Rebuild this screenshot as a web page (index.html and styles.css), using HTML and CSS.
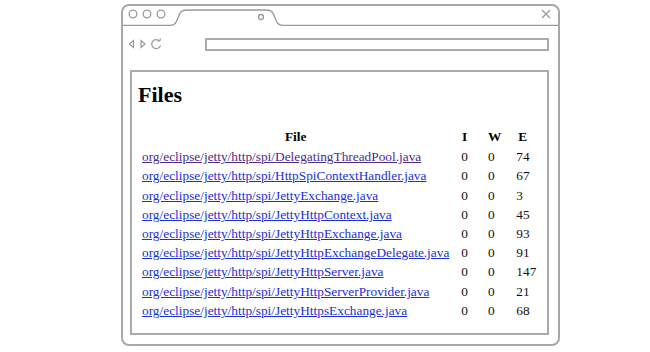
FILE: index.html
```html
<!DOCTYPE html>
<html lang="en">
<head>
  <meta charset="UTF-8" />
  <title>Files</title>
  <link rel="stylesheet" href="styles.css">
</head>
<body>

  <div class="window">
    <svg class="titlebar" width="435" height="20" viewBox="0 0 435 20">
      <g fill="none" stroke="#9a9a9a" stroke-width="1.3">
        <circle cx="10" cy="8" r="3.8" />
        <circle cx="24" cy="8" r="3.8" />
        <circle cx="38" cy="8" r="3.8" />
        <path d="M0 19.3 H47 C52 19.3 53 17 55 12 C57 6 58 4 64 4 H143 C149 4 150 6 152 12 C154 17 155 19.3 160 19.3 H435" />
        <circle cx="138" cy="11" r="2.5" />
        <path d="M419 4 L427 12 M427 4 L419 12" />
      </g>
    </svg>

    <div class="toolbar">
      <svg class="nav" width="36" height="12" viewBox="0 0 36 12">
        <g fill="none" stroke="#9a9a9a" stroke-width="1.2">
          <path d="M5.5 2.5 L1.5 6 L5.5 9.5 Z" />
          <path d="M13 2.5 L17 6 L13 9.5 Z" />
          <path d="M31.5 3 A4.5 4.5 0 1 0 32.5 7.5" />
          <path d="M29.5 3.2 L32 2.6 L32.4 0.4" />
        </g>
      </svg>
      <div class="address"></div>
    </div>

    <div class="viewport">
      <h1>Files</h1>
      <table class="files">
        <thead>
          <tr>
            <th>File</th>
            <th class="c-i">I</th>
            <th class="c-w">W</th>
            <th class="c-e">E</th>
          </tr>
        </thead>
        <tbody>
          <tr>
            <td><a class="visited" href="#">org/eclipse/jetty/http/spi/DelegatingThreadPool.java</a></td>
            <td class="c-i">0</td><td class="c-w">0</td><td class="c-e">74</td>
          </tr>
          <tr>
            <td><a href="#">org/eclipse/jetty/http/spi/HttpSpiContextHandler.java</a></td>
            <td class="c-i">0</td><td class="c-w">0</td><td class="c-e">67</td>
          </tr>
          <tr>
            <td><a href="#">org/eclipse/jetty/http/spi/JettyExchange.java</a></td>
            <td class="c-i">0</td><td class="c-w">0</td><td class="c-e">3</td>
          </tr>
          <tr>
            <td><a href="#">org/eclipse/jetty/http/spi/JettyHttpContext.java</a></td>
            <td class="c-i">0</td><td class="c-w">0</td><td class="c-e">45</td>
          </tr>
          <tr>
            <td><a href="#">org/eclipse/jetty/http/spi/JettyHttpExchange.java</a></td>
            <td class="c-i">0</td><td class="c-w">0</td><td class="c-e">93</td>
          </tr>
          <tr>
            <td><a href="#">org/eclipse/jetty/http/spi/JettyHttpExchangeDelegate.java</a></td>
            <td class="c-i">0</td><td class="c-w">0</td><td class="c-e">91</td>
          </tr>
          <tr>
            <td><a href="#">org/eclipse/jetty/http/spi/JettyHttpServer.java</a></td>
            <td class="c-i">0</td><td class="c-w">0</td><td class="c-e">147</td>
          </tr>
          <tr>
            <td><a href="#">org/eclipse/jetty/http/spi/JettyHttpServerProvider.java</a></td>
            <td class="c-i">0</td><td class="c-w">0</td><td class="c-e">21</td>
          </tr>
          <tr>
            <td><a href="#">org/eclipse/jetty/http/spi/JettyHttpsExchange.java</a></td>
            <td class="c-i">0</td><td class="c-w">0</td><td class="c-e">68</td>
          </tr>
        </tbody>
      </table>
    </div>
  </div>

</body>
</html>
```

FILE: styles.css
```css
html, body {
  margin: 0;
  background: #fff;
}
body {
  font-family: 'Liberation Serif', 'Times New Roman', serif;
  font-size: 13.33px;
  color: #111;
  padding-top: 4px;
}
.window {
  box-sizing: border-box;
  width: 439px;
  height: 342px;
  margin-left: 121px;
  border: 2px solid #a8a8a8;
  border-radius: 8px;
  display: flex;
  flex-direction: column;
}
.titlebar {
  display: block;
  flex: none;
}
.toolbar {
  height: 36px;
  display: flex;
  align-items: center;
  padding-left: 5px;
  flex: none;
}
.nav {
  display: block;
}
.address {
  box-sizing: border-box;
  height: 13px;
  width: 344px;
  margin-left: auto;
  margin-right: 9px;
  border: 2px solid #ababab;
}
.viewport {
  flex: 1;
  margin: 8px 9px 9px 7px;
  border: 2px solid #ababab;
  padding: 10px 6px 0;
}
h1 {
  margin: 0;
  font-size: 22px;
  line-height: 25px;
  font-weight: bold;
  color: #000;
}
.files {
  margin: 19px 0 0 1px;
  border-spacing: 2px;
}
.files th, .files td {
  padding: 0 1px;
  line-height: 17.2px;
  text-align: left;
  white-space: nowrap;
}
.files th {
  text-align: center;
  padding-bottom: 1px;
  color: #000;
}
.files .c-i {
  padding-left: 9px;
}
.files .c-w {
  padding-left: 17px;
}
.files .c-e {
  padding-left: 12px;
}
.files th.c-e {
  text-align: left;
  padding-left: 14px;
}
a {
  color: #1a2fd8;
}
a.visited {
  color: #4b2a8e;
}
```
